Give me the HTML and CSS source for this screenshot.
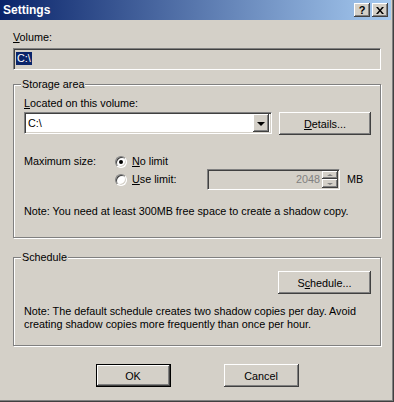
FILE: index.html
```html
<!DOCTYPE html>
<html lang="en">
<head>
<meta charset="UTF-8" />
<title>Settings</title>
<link rel="stylesheet" href="styles.css">
</head>
<body>

<div class="window">
  <div class="titlebar">
    <span class="title">Settings</span>
    <div class="caption-btns">
      <span class="cbtn">?</span>
      <span class="cbtn">
        <svg width="8" height="7" viewBox="0 0 8 7"><path d="M0 0h2l2 2.5L6 0h2L5 3.5 8 7H6L4 4.5 2 7H0l3-3.5z" fill="#000"/></svg>
      </span>
    </div>
  </div>

  <div class="content">
    <div class="lbl"><u>V</u>olume:</div>
    <div class="field sunken"><span class="selected">C:\</span></div>

    <fieldset class="group storage">
      <legend>Storage area</legend>
      <div class="lbl"><u>L</u>ocated on this volume:</div>
      <div class="row">
        <div class="combo sunken">
          <span>C:\</span>
          <span class="drop raised"><span class="arrow"></span></span>
        </div>
        <button class="btn raised details"><u>D</u>etails...</button>
      </div>

      <div class="size">
        <div class="size-lbl">Maximum size:</div>
        <label class="opt wide"><span class="radio checked"></span><span><u>N</u>o limit</span></label>
        <label class="opt second"><span class="radio"></span><span><u>U</u>se limit:</span></label>
        <div class="spin sunken">
          <span class="spin-val">2048</span>
          <span class="spin-btns">
            <span class="spin-btn raised"><span class="tri up"></span></span>
            <span class="spin-btn raised"><span class="tri down"></span></span>
          </span>
        </div>
        <div class="unit">MB</div>
      </div>

      <p class="note">Note: You need at least 300MB free space to create a shadow copy.</p>
    </fieldset>

    <fieldset class="group schedule">
      <legend>Schedule</legend>
      <button class="btn raised sched">S<u>c</u>hedule...</button>
      <p class="note sched-note">Note: The default schedule creates two shadow copies per day. Avoid<br>creating shadow copies more frequently than once per hour.</p>
    </fieldset>

    <div class="actions">
      <button class="btn raised default">OK</button>
      <button class="btn raised">Cancel</button>
    </div>
  </div>
</div>

</body>
</html>
```

FILE: styles.css
```css
body {
  margin: 0;
  font-family: 'Liberation Sans', Arial, sans-serif;
  font-size: 10.8px;
  color: #000;
  background-color: #d4d0c8;
}
.window {
  width: 394px;
  height: 402px;
  box-sizing: border-box;
  background-color: #d4d0c8;
  box-shadow: inset -1px -1px #404040, inset -2px -2px #808080;
  overflow: hidden;
}
.titlebar {
  height: 20px;
  margin-right: 3px;
  padding: 0 3px 0 3px;
  display: flex;
  align-items: center;
  justify-content: space-between;
  background: linear-gradient(to right, #0a246a, #a6caf0);
  color: #fff;
  font-weight: bold;
}
.title {
  font-size: 12px;
}
.caption-btns {
  display: flex;
  gap: 2px;
}
.cbtn {
  width: 16px;
  height: 14px;
  display: flex;
  align-items: center;
  justify-content: center;
  background-color: #d4d0c8;
  color: #000;
  font-size: 11px;
  box-shadow: inset -1px -1px #404040, inset 1px 1px #fff, inset -2px -2px #808080;
}
.content {
  padding: 11px 13px 0;
}
.lbl {
  line-height: 13px;
}
.sunken {
  box-sizing: border-box;
  border: 1px solid;
  border-color: #808080 #fff #fff #808080;
  box-shadow: inset 1px 1px #404040, inset -1px -1px #d4d0c8;
}
.raised {
  box-sizing: border-box;
  background-color: #d4d0c8;
  box-shadow: inset -1px -1px #404040, inset 1px 1px #fff, inset -2px -2px #808080;
}
.field {
  margin-top: 4px;
  height: 22px;
  padding: 3px 0 0 2px;
}
.selected {
  display: inline-block;
  line-height: 13px;
  padding: 0 1px;
  background-color: #0a246a;
  color: #fff;
}
.group {
  margin: 8px 0 0;
  border: 1px solid #808080;
  box-shadow: inset 1px 1px #fff, 1px 1px #fff;
  min-width: 0;
}
.group legend {
  padding: 0 1px;
  margin-left: -3px;
  line-height: 12px;
  background-color: #d4d0c8;
}
.storage {
  padding: 7px 9px 19px 10px;
}
.row {
  display: flex;
  align-items: flex-start;
  gap: 7px;
  margin-top: 2px;
}
.combo {
  width: 248px;
  height: 22px;
  padding: 0 2px 0 3px;
  display: flex;
  align-items: center;
  justify-content: space-between;
  background-color: #fff;
}
.drop {
  width: 16px;
  height: 18px;
  display: flex;
  align-items: center;
  justify-content: center;
}
.arrow {
  width: 0;
  height: 0;
  border-left: 4px solid transparent;
  border-right: 4px solid transparent;
  border-top: 4px solid #000;
  margin-top: 1px;
}
.btn {
  height: 23px;
  padding: 0;
  border: none;
  font: inherit;
  color: #000;
}
.details {
  width: 92px;
}
.size {
  display: grid;
  grid-template-columns: 90px 93px 133px auto;
  row-gap: 1px;
  align-items: center;
  margin-top: 20px;
  line-height: 13px;
}
.opt {
  display: flex;
  align-items: center;
  gap: 5px;
  padding-left: 1px;
}
.opt.wide {
  grid-column: 2 / span 3;
}
.opt.second {
  grid-column: 2;
}
.radio {
  width: 12px;
  height: 12px;
  box-sizing: border-box;
  border-radius: 50%;
  border: 1px solid;
  border-color: #808080 #fff #fff #808080;
  box-shadow: inset 1px 1px #404040, inset -1px -1px #d4d0c8;
  background-color: #fff;
  display: flex;
  align-items: center;
  justify-content: center;
}
.radio.checked::after {
  content: '';
  width: 4px;
  height: 4px;
  border-radius: 50%;
  background-color: #000;
}
.spin {
  height: 21px;
  display: flex;
  align-items: center;
  justify-content: flex-end;
  padding-right: 1px;
  color: #808080;
  background-color: #d4d0c8;
}
.spin-val {
  margin-right: 2px;
}
.spin-btns {
  display: flex;
  flex-direction: column;
}
.spin-btn {
  width: 16px;
  height: 8px;
  display: flex;
  align-items: center;
  justify-content: center;
}
.spin-btn + .spin-btn {
  height: 9px;
}
.tri {
  width: 0;
  height: 0;
  border-left: 3px solid transparent;
  border-right: 3px solid transparent;
}
.tri.up {
  border-bottom: 2px solid #808080;
}
.tri.down {
  border-top: 2px solid #808080;
}
.unit {
  margin-left: 7px;
}
.note {
  margin: 15px 0 0;
  line-height: 13px;
}
.schedule {
  margin-top: 13px;
  padding: 8px 9px 14px 10px;
}
.sched {
  display: block;
  width: 93px;
  margin-left: auto;
}
.sched-note {
  margin-top: 11px;
}
.actions {
  display: flex;
  justify-content: center;
  gap: 53px;
  margin-top: 18px;
}
.actions .btn {
  width: 75px;
}
.btn.default {
  border: 1px solid #000;
}
```
